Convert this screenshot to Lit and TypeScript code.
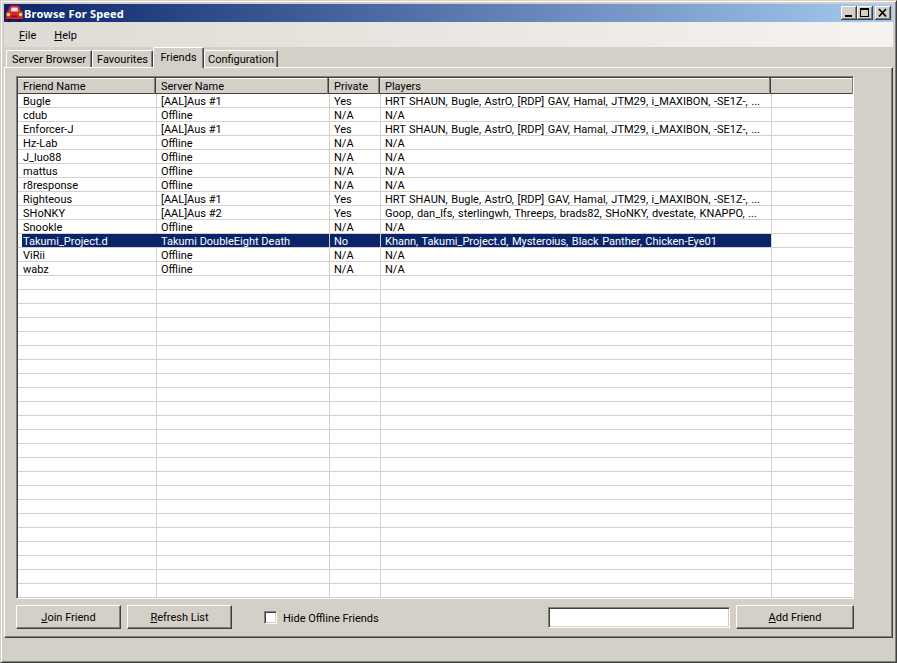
import { LitElement, html, css } from "lit";
import { customElement } from "lit/decorators.js";

const A1 = "HRT SHAUN, Bugle, AstrO, [RDP] GAV, Hamal, JTM29, i_MAXIBON, -SE1Z-, ...";
const A2 = "Goop, dan_lfs, sterlingwh, Threeps, brads82, SHoNKY, dvestate, KNAPPO, ...";
const A3 = "Khann, Takumi_Project.d, Mysteroius, Black Panther, Chicken-Eye01";
const rows: [string, string, string, string][] = [
  ["Bugle", "[AAL]Aus #1", "Yes", A1],
  ["cdub", "Offline", "N/A", "N/A"],
  ["Enforcer-J", "[AAL]Aus #1", "Yes", A1],
  ["Hz-Lab", "Offline", "N/A", "N/A"],
  ["J_luo88", "Offline", "N/A", "N/A"],
  ["mattus", "Offline", "N/A", "N/A"],
  ["r8response", "Offline", "N/A", "N/A"],
  ["Righteous", "[AAL]Aus #1", "Yes", A1],
  ["SHoNKY", "[AAL]Aus #2", "Yes", A2],
  ["Snookle", "Offline", "N/A", "N/A"],
  ["Takumi_Project.d", "Takumi DoubleEight Death", "No", A3],
  ["ViRii", "Offline", "N/A", "N/A"],
  ["wabz", "Offline", "N/A", "N/A"],
];
const TOTAL = 36;

@customElement("app-root")
export class AppRoot extends LitElement {
  static styles = css`
    :host { display: block; width: 897px; height: 663px; font: 11px/14px Roboto, "Noto Sans", sans-serif; color: #000; }
    * { box-sizing: border-box; }
    .win { width: 897px; height: 663px; background: #d4d0c8; padding: 3px 3px 2px 3px; display: flex; flex-direction: column;
      border-style: solid; border-width: 1px; border-color: #d4d0c8 #404040 #404040 #d4d0c8; box-shadow: inset 1px 1px 0 #fff, inset -1px -1px 0 #808080; }
    .title { height: 18px; flex: none; background: linear-gradient(90deg, #0a246a, #a6caf0); display: flex; align-items: center; padding: 0 2px 0 2px; color: #fff; font: bold 11px "Noto Sans", sans-serif; }
    .title .ic { flex: none; margin-right: 1px; }
    .title .t { flex: 1; letter-spacing: .2px; }
    .wb { width: 16px; height: 14px; background: #d4d0c8; flex: none; box-shadow: inset -1px -1px 0 #404040, inset 1px 1px 0 #fff, inset -2px -2px 0 #808080; display: block; }
    .wb.gap { margin-left: 2px; }
    .menu { height: 25px; flex: none; background: linear-gradient(90deg, #dedbd4, #f5f3ef); display: flex; align-items: center; padding: 2px 0 0 15px; gap: 18px; }
    .tabs { height: 20px; flex: none; display: flex; align-items: flex-end; padding-left: 2px; position: relative; z-index: 1; }
    .tab { height: 17px; padding-top: 2px; text-align: center; border: 1px solid; border-color: #fff #404040 transparent #fff; border-bottom: 0; border-radius: 2px 2px 0 0; box-shadow: inset -1px 0 0 #808080; white-space: nowrap; background: #d4d0c8; flex: none; }
    .t1 { width: 86px; }
    .t2 { width: 61px; }
    .t3 { width: 51px; height: 21px; padding-top: 3px; margin-bottom: -1px; }
    .t4 { width: 74px; }
    .panel { height: 571px; flex: none; border: 1px solid; border-color: #fff #404040 #404040 #fff; box-shadow: inset -1px -1px 0 #808080; padding: 8px 0 0 11px; display: flex; flex-direction: column; width: 889px; }
    .list { width: 838px; height: 523px; flex: none; background: #fff; border: 1px solid; border-color: #808080 #fff #fff #808080; box-shadow: inset 1px 1px 0 #404040; padding: 1px 0 0 1px; overflow: hidden; display: flex; flex-direction: column; }
    .r { display: grid; grid-template-columns: 139px 173px 51px 391px 81px; flex: none; }
    .head { height: 16px; background: #d4d0c8; grid-template-columns: 138px 173px 51px 391px 82px; }
    .h { padding: 2px 0 0 5px; border-right: 1px solid #404040; box-shadow: inset -1px 0 0 #808080, inset 0 -1px 0 #404040, inset 0 1px 0 #fff; white-space: nowrap; }
    .h:last-child { border-right: 0; }
    .row { height: 14px; border-bottom: 1px solid #d4d0c8; }
    .c { border-right: 1px solid #d4d0c8; padding-left: 4px; height: 13px; line-height: 15px; white-space: nowrap; }
    .c:last-child { border-right: 0; padding: 0; }
    .c.pl { word-spacing: .8px; }
    .lb { display: block; padding-left: 1px; height: 13px; }
    .row.sel .c:not(:first-child):not(:last-child) { background: #0a246a; color: #fff; }
    .row.sel .lb { background: #0a246a; color: #fff; margin-right: -1px; }
    .foot { flex: 1; display: flex; align-items: flex-start; padding-top: 6px; width: 838px; }
    .btn { height: 24px; padding-top: 2px; background: #d4d0c8; border: 1px solid; border-color: #fff #404040 #404040 #fff; box-shadow: inset -1px -1px 0 #808080; display: flex; align-items: center; justify-content: center; flex: none; width: 105px; }
    .btn.b2 { margin-left: 6px; }
    .btn.b3 { width: 118px; margin-left: 6px; }
    .chk { margin-left: 32px; margin-top: 6px; width: 13px; height: 13px; background: #fff; border: 1px solid; border-color: #808080 #fff #fff #808080; box-shadow: inset 1px 1px 0 #404040, inset -1px -1px 0 #d4d0c8; flex: none; }
    .cl { margin-left: 6px; margin-top: 7px; flex: 1; }
    .input { width: 182px; height: 21px; margin-top: 2px; background: #fff; border: 1px solid; border-color: #808080 #fff #fff #808080; box-shadow: inset 1px 1px 0 #404040, inset -1px -1px 0 #d4d0c8; flex: none; }
    .status { flex: 1; }
  `;

  render() {
    const empty = Array.from({ length: TOTAL - rows.length });
    return html`<div class="win">
      <div class="title">
        <svg class="ic" width="17" height="17" viewBox="0 0 17 17">
          <path d="M3.500 1.500Q4 .5 6 .5h5q2 0 2.500 1L15 6h.5Q17 6.500 17 8v5q0 1-1 1H1q-1 0-1-1V8q0-1.500 1.500-2H2z" fill="#d8242c"/>
          <path d="M5.500 2.500h6L12.500 6.500h-8z" fill="#cfdcf0"/>
          <path d="M7 3.500l2 2M9.500 3l1 1" stroke="#fff" stroke-width=".8"/>
          <circle cx="2.500" cy="9.500" r="1.800" fill="#f6d24a"/><circle cx="14.500" cy="9.500" r="1.800" fill="#f6d24a"/>
          <rect x="5.500" y="10.500" width="6" height="1.500" fill="#8a1016"/>
          <rect x="2" y="14" width="3" height="2.500" fill="#241414"/><rect x="12" y="14" width="3" height="2.500" fill="#241414"/>
        </svg>
        <span class="t">Browse For Speed</span>
        <svg class="wb" viewBox="0 0 16 14"><rect x="4" y="9" width="7" height="2" fill="#000"/></svg>
        <svg class="wb" viewBox="0 0 16 14"><path d="M3 2h9v9H3z M4 4v6h7V4z" fill="#000" fill-rule="evenodd"/></svg>
        <svg class="wb gap" viewBox="0 0 16 14"><path d="M4 3l7 7.500M11 3l-7 7.500" stroke="#000" stroke-width="1.700"/></svg>
      </div>
      <div class="menu"><span><u>F</u>ile</span><span><u>H</u>elp</span></div>
      <div class="tabs">
        <div class="tab t1">Server Browser</div>
        <div class="tab t2">Favourites</div>
        <div class="tab t3">Friends</div>
        <div class="tab t4">Configuration</div>
      </div>
      <div class="panel">
        <div class="list">
          <div class="r head">
            <div class="h">Friend Name</div><div class="h">Server Name</div><div class="h">Private</div><div class="h">Players</div><div class="h"></div>
          </div>
          ${rows.map((r) => html`<div class="r row ${r[0].startsWith("Takumi") ? "sel" : ""}">
            <div class="c"><span class="lb">${r[0]}</span></div>
            <div class="c">${r[1]}</div><div class="c">${r[2]}</div><div class="c pl">${r[3]}</div><div class="c"></div>
          </div>`)}
          ${empty.map(() => html`<div class="r row"><div class="c"></div><div class="c"></div><div class="c"></div><div class="c"></div><div class="c"></div></div>`)}
        </div>
        <div class="foot">
          <div class="btn"><span><u>J</u>oin Friend</span></div>
          <div class="btn b2"><span><u>R</u>efresh List</span></div>
          <div class="chk"></div>
          <div class="cl">Hide Offline Friends</div>
          <div class="input"></div>
          <div class="btn b3"><span><u>A</u>dd Friend</span></div>
        </div>
      </div>
      <div class="status"></div>
    </div>`;
  }
}
